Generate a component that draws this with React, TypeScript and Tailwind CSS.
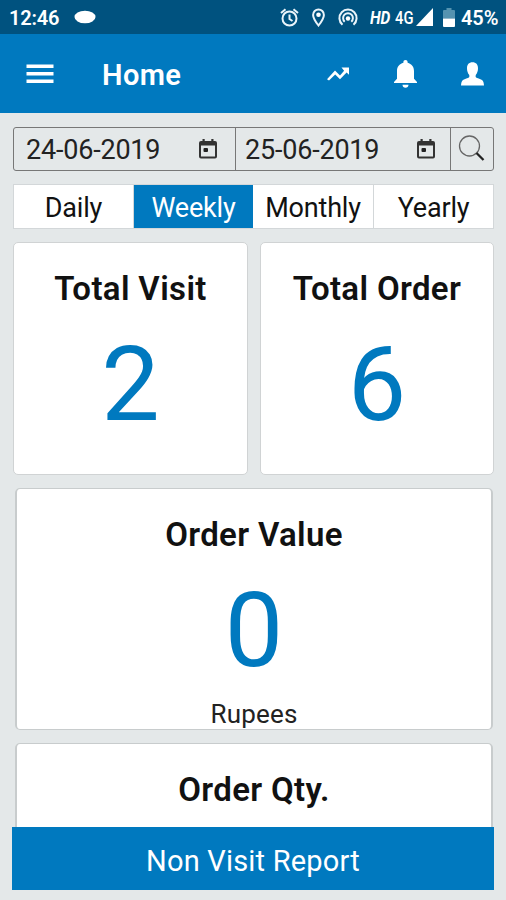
import React from "react";

interface StatCardProps {
    title: string;
    value?: string;
    unit?: string;
    className: string;
}

const StatCard: React.FC<StatCardProps> = ({ title, value, unit, className }) => {
    return (
        <div className={`flex flex-col items-center rounded-[5px] border bg-white ${className}`}>
            <h2 className="mt-[26px] h-10 text-[33px] leading-10 font-semibold tracking-[0.35px] whitespace-nowrap text-[#111]">
                {title}
            </h2>
            {value && <p className="mt-[16px] h-[120px] text-[104px] leading-[120px] text-[#0079bf]">{value}</p>}
            {unit && <p className="mt-[7px] text-[26px] leading-[32px] tracking-[0.2px] text-[#222]">{unit}</p>}
        </div>
    );
};

const DateField: React.FC<{ date: string; className: string }> = ({ date, className }) => {
    return (
        <div className={`flex items-center justify-between border-r border-[#777] ${className}`}>
            <span className="pt-[3px] text-[27px] tracking-[-0.2px] text-[#222]">{date}</span>
            <svg width="18" height="20" viewBox="0 0 18 20">
                <path
                    d="M2 2h1.500V0h2.200v2h6.600V0h2.200v2H16a2 2 0 0 1 2 2v13.500a2 2 0 0 1-2 2H2a2 2 0 0 1-2-2V4a2 2 0 0 1 2-2zM2 6.500v11h14v-11z"
                    fill="#333"
                    fillRule="evenodd"
                />
                <rect x="4.500" y="9" width="4.500" height="4" rx="1" fill="#222" />
            </svg>
        </div>
    );
};

const StatusBar: React.FC = () => {
    return (
        <div className="flex h-[34px] items-center bg-[#00527f] pl-[9px] text-white">
            <span className="w-[65px] pt-[2px] text-[20px] font-semibold tracking-[-0.2px]">12:46</span>
            <svg width="22" height="14" viewBox="0 0 22 14">
                <ellipse cx="11" cy="7" rx="10.500" ry="6.300" fill="#fff" />
            </svg>
            {/* alarm, location and hotspot */}
            <svg className="ml-[184px]" width="78" height="20" viewBox="0 0 78 20" fill="none" stroke="#eaf4fa" strokeWidth="2">
                <circle cx="9.500" cy="11.500" r="7" />
                <path d="M9.500 7.500v4.500l3 2M1 6l4.500-3.800M18 6l-4.500-3.800" />
                <path d="M38.500 18.500c-3-3.900-5.400-7.200-5.400-10.600a5.400 5.400 0 0 1 10.800 0c0 3.400-2.400 6.700-5.400 10.600z" />
                <circle cx="38.500" cy="7.800" r="2.300" fill="#fff" stroke="none" />
                <path d="M62.500 17.700a8.600 8.600 0 1 1 11 0" />
                <path d="M64.700 14.700a4.900 4.900 0 1 1 6.600 0" />
                <circle cx="68" cy="11.500" r="2.200" fill="#fff" stroke="none" />
            </svg>
            <span className="ml-[12px] w-[25px] origin-left scale-x-[0.86] text-[18px] font-bold italic">HD</span>
            <span className="w-[21px] origin-left scale-x-[0.82] text-[18px] font-medium">4G</span>
            <svg width="17" height="18" viewBox="0 0 17 18">
                <path d="M17 0v18H0z" fill="#fff" />
            </svg>
            <svg className="ml-[10px]" width="12" height="19" viewBox="0 0 12 19">
                <path d="M3.500 0h5v2H11a1 1 0 0 1 1 1v7.500H0V3a1 1 0 0 1 1-1h2.500z" fill="#5593b0" />
                <path d="M0 10.500h12V18a1 1 0 0 1-1 1H1a1 1 0 0 1-1-1z" fill="#fff" />
            </svg>
            <span className="ml-[6px] pt-[2px] text-[20px] font-semibold tracking-[-0.1px]">45%</span>
        </div>
    );
};

const Header: React.FC = () => {
    return (
        <header className="flex h-[79px] items-center bg-[#0079bf] pl-[26px] text-white">
            <button className="w-[76px]">
                <svg width="28" height="20" viewBox="0 0 28 20" fill="#fff">
                    <path d="M.5.500h27v3.500H.5zM.5 8h27v3.500H.5zM.5 15.500h27V19H.5z" />
                </svg>
            </button>
            <h1 className="w-[225px] pt-[4px] text-[29px] font-semibold tracking-[0.400px]">Home</h1>
            <svg width="22" height="14" viewBox="0 0 22 14" fill="#fff">
                <path d="M14.500 0.500H22v7.300l-2.400-2.400-6.600 6.800-4.800-4.700-6.200 6.100L0 12.300l8-8.800 5 4.900 4.100-4.700z" />
            </svg>
            <svg className="ml-[45px]" width="23" height="28" viewBox="0 0 23 28" fill="#fff">
                <path d="M11.500 0c1.300 0 2.100.9 2.100 2v.8c4 1 6.400 4.100 6.400 8.200v7.800l3 3.200V23H0v-1l3-3.200V11c0-4.100 2.400-7.200 6.400-8.200V2c0-1.100.8-2 2.100-2zM8.500 24.800h6c0 1.700-1.300 3-3 3s-3-1.300-3-3z" />
            </svg>
            <svg className="ml-[44px]" width="23" height="24" viewBox="0 0 23 24" fill="#fff">
                <path d="M11.500.3c3.600 0 5.500 2.300 5.500 5.900 0 2.600-.7 4.900-2.100 6.500-.4.600-.4 2.400.2 2.800.8.700 4.100 1.400 5.900 2.500 1.500.9 1.800 3 2 5.500H0c.2-2.500.5-4.600 2-5.500 1.800-1.100 5.100-1.800 5.900-2.500.6-.4.6-2.200.2-2.800C6.700 11.100 6 8.800 6 6.200 6 2.600 7.900.3 11.500.3z" />
            </svg>
        </header>
    );
};

export default function App() {
    return (
        <div className="flex h-[900px] w-[506px] flex-col overflow-hidden bg-[#e4e8e9] font-[Roboto,sans-serif]">
            <StatusBar />
            <Header />

            <div className="mt-[14px] ml-[13px] flex h-[44px] w-[481px] shrink-0 rounded-[3px] border border-[#777]">
                <DateField date="24-06-2019" className="w-[222px] pr-[18px] pl-[12px]" />
                <DateField date="25-06-2019" className="w-[215px] pr-[15px] pl-[9px]" />
                <button className="flex flex-1 items-center justify-center pr-[2px] pb-px">
                    <svg width="27" height="27" viewBox="0 0 27 27" fill="none">
                        <circle cx="11.500" cy="11" r="10" stroke="#666" strokeWidth="1.300" />
                        <path d="M18.500 18l7 7" stroke="#222" strokeWidth="2.300" />
                    </svg>
                </button>
            </div>

            <div className="mt-[13px] ml-[13px] grid h-[45px] w-[481px] shrink-0 grid-cols-[120px_119px_121px_119px] border border-[#d3d7d9] bg-white text-[27px] leading-[38px] tracking-[-0.200px] text-[#111]">
                <button className="border-r border-[#d3d7d9] pt-[3px]">Daily</button>
                <button className="bg-[#0079bf] pt-[3px] text-white">Weekly</button>
                <button className="border-r border-[#d3d7d9] pt-[3px]">Monthly</button>
                <button className="pt-[3px]">Yearly</button>
            </div>

            <div className="mt-[13px] ml-[13px] flex shrink-0 gap-[12px]">
                <StatCard title="Total Visit" value="2" className="h-[233px] w-[235px] border-[#d0d3d4]" />
                <StatCard title="Total Order" value="6" className="h-[233px] w-[234px] border-[#d0d3d4]" />
            </div>

            <div className="mt-[13px] ml-[15px] flex h-[339px] w-[478px] shrink-0 flex-col gap-[13px] overflow-hidden">
                <StatCard title="Order Value" value="0" unit="Rupees" className="h-[242px] shrink-0 border-x-2 border-[#c8cccd]" />
                <StatCard title="Order Qty." className="h-[242px] shrink-0 border-x-2 border-[#c8cccd]" />
            </div>

            <button className="mb-[10px] ml-[12px] h-[63px] w-[482px] shrink-0 bg-[#0079bf] pt-[7px] text-[29px] tracking-[0.200px] text-white">
                Non Visit Report
            </button>
        </div>
    );
}
